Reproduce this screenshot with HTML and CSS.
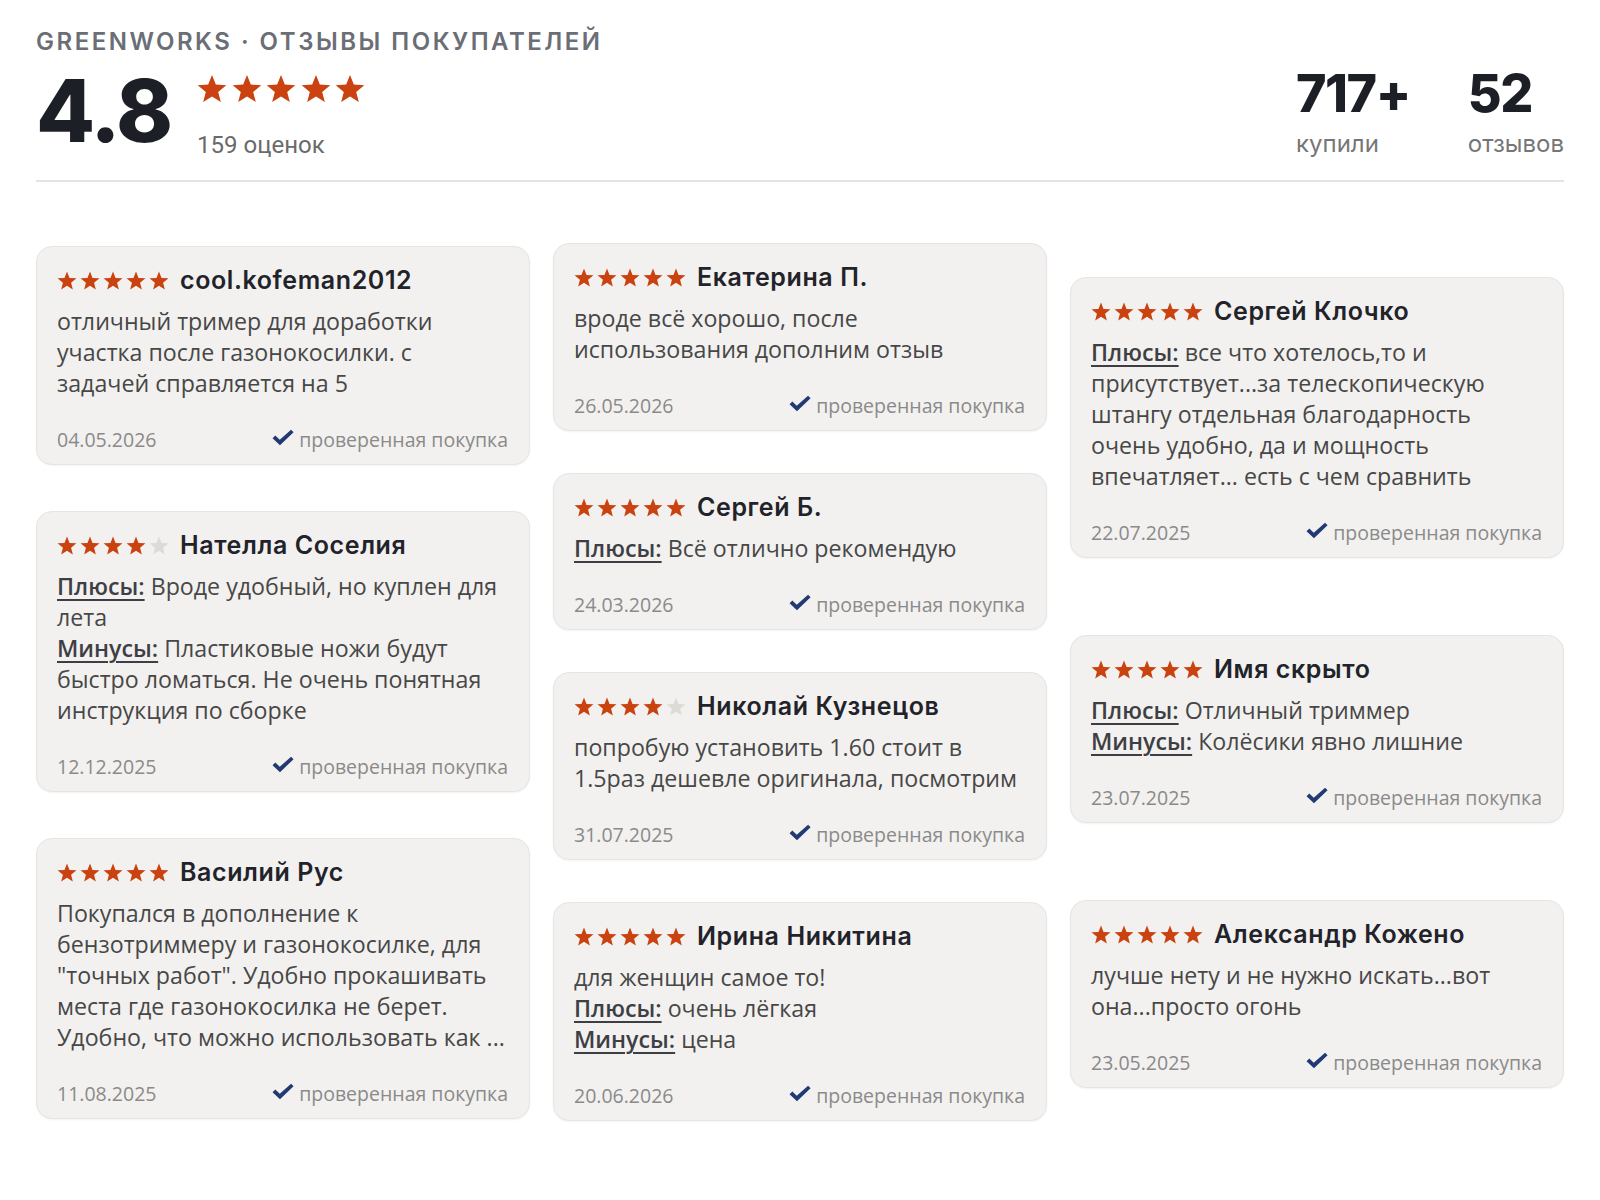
FILE: index.html
```html
<!DOCTYPE html>
<html lang="ru">
<head>
<meta charset="utf-8">
<title>Greenworks · отзывы покупателей</title>
<link rel="stylesheet" href="styles.css">
</head>
<body>
<svg class="defs" aria-hidden="true">
  <defs>
    <symbol id="star" viewBox="0 0 24 23">
      <polygon points="12,0.6 15.06,8.39 23.41,8.89 16.95,14.21 19.05,22.31 12,17.8 4.95,22.31 7.05,14.21 0.59,8.89 8.94,8.39"/>
    </symbol>
    <symbol id="check" viewBox="0 0 21 16">
      <polygon points="0.5,8.6 3.2,6.2 7.4,10.2 18.2,0.5 20.6,2.9 7.6,15.5"/>
    </symbol>
  </defs>
</svg>

<main class="page">
  <header class="summary">
    <div class="brand">GREENWORKS · ОТЗЫВЫ ПОКУПАТЕЛЕЙ</div>
    <div class="summary-row">
      <div class="rating">
        <div class="score">4.8</div>
        <div class="rating-meta">
          <div class="big-stars">
            <svg class="bstar"><use href="#star"/></svg>
            <svg class="bstar"><use href="#star"/></svg>
            <svg class="bstar"><use href="#star"/></svg>
            <svg class="bstar"><use href="#star"/></svg>
            <svg class="bstar"><use href="#star"/></svg>
          </div>
          <div class="count">159 оценок</div>
        </div>
      </div>
      <div class="stats">
        <div class="stat">
          <div class="stat-num">717+</div>
          <div class="stat-label">купили</div>
        </div>
        <div class="stat">
          <div class="stat-num">52</div>
          <div class="stat-label">отзывов</div>
        </div>
      </div>
    </div>
  </header>

  <section class="grid">
    <div class="col col-a">
      <article class="card">
        <div class="card-head">
          <span class="stars"><svg class="s on"><use href="#star"/></svg><svg class="s on"><use href="#star"/></svg><svg class="s on"><use href="#star"/></svg><svg class="s on"><use href="#star"/></svg><svg class="s on"><use href="#star"/></svg></span>
          <span class="name">cool.kofeman2012</span>
        </div>
        <p class="text">отличный тример для доработки участка после газонокосилки. с задачей справляется на 5</p>
        <div class="foot"><span class="date">04.05.2026</span><span class="verified"><svg class="check"><use href="#check"/></svg>проверенная покупка</span></div>
      </article>

      <article class="card">
        <div class="card-head">
          <span class="stars"><svg class="s on"><use href="#star"/></svg><svg class="s on"><use href="#star"/></svg><svg class="s on"><use href="#star"/></svg><svg class="s on"><use href="#star"/></svg><svg class="s off"><use href="#star"/></svg></span>
          <span class="name">Нателла Соселия</span>
        </div>
        <p class="text"><span class="lbl">Плюсы:</span> Вроде удобный, но куплен для лета</p>
        <p class="text next"><span class="lbl">Минусы:</span> Пластиковые ножи будут быстро ломаться. Не очень понятная инструкция по сборке</p>
        <div class="foot"><span class="date">12.12.2025</span><span class="verified"><svg class="check"><use href="#check"/></svg>проверенная покупка</span></div>
      </article>

      <article class="card">
        <div class="card-head">
          <span class="stars"><svg class="s on"><use href="#star"/></svg><svg class="s on"><use href="#star"/></svg><svg class="s on"><use href="#star"/></svg><svg class="s on"><use href="#star"/></svg><svg class="s on"><use href="#star"/></svg></span>
          <span class="name">Василий Рус</span>
        </div>
        <p class="text clamp">Покупался в дополнение к бензотриммеру и газонокосилке, для "точных работ". Удобно прокашивать места где газонокосилка не берет. Удобно, что можно использовать как ...</p>
        <div class="foot"><span class="date">11.08.2025</span><span class="verified"><svg class="check"><use href="#check"/></svg>проверенная покупка</span></div>
      </article>
    </div>

    <div class="col col-b">
      <article class="card">
        <div class="card-head">
          <span class="stars"><svg class="s on"><use href="#star"/></svg><svg class="s on"><use href="#star"/></svg><svg class="s on"><use href="#star"/></svg><svg class="s on"><use href="#star"/></svg><svg class="s on"><use href="#star"/></svg></span>
          <span class="name">Екатерина П.</span>
        </div>
        <p class="text">вроде всё хорошо, после использования дополним отзыв</p>
        <div class="foot"><span class="date">26.05.2026</span><span class="verified"><svg class="check"><use href="#check"/></svg>проверенная покупка</span></div>
      </article>

      <article class="card">
        <div class="card-head">
          <span class="stars"><svg class="s on"><use href="#star"/></svg><svg class="s on"><use href="#star"/></svg><svg class="s on"><use href="#star"/></svg><svg class="s on"><use href="#star"/></svg><svg class="s on"><use href="#star"/></svg></span>
          <span class="name">Сергей Б.</span>
        </div>
        <p class="text"><span class="lbl">Плюсы:</span> Всё отлично рекомендую</p>
        <div class="foot"><span class="date">24.03.2026</span><span class="verified"><svg class="check"><use href="#check"/></svg>проверенная покупка</span></div>
      </article>

      <article class="card">
        <div class="card-head">
          <span class="stars"><svg class="s on"><use href="#star"/></svg><svg class="s on"><use href="#star"/></svg><svg class="s on"><use href="#star"/></svg><svg class="s on"><use href="#star"/></svg><svg class="s off"><use href="#star"/></svg></span>
          <span class="name">Николай Кузнецов</span>
        </div>
        <p class="text">попробую установить 1.60 стоит в 1.5раз дешевле оригинала, посмотрим</p>
        <div class="foot"><span class="date">31.07.2025</span><span class="verified"><svg class="check"><use href="#check"/></svg>проверенная покупка</span></div>
      </article>

      <article class="card">
        <div class="card-head">
          <span class="stars"><svg class="s on"><use href="#star"/></svg><svg class="s on"><use href="#star"/></svg><svg class="s on"><use href="#star"/></svg><svg class="s on"><use href="#star"/></svg><svg class="s on"><use href="#star"/></svg></span>
          <span class="name">Ирина Никитина</span>
        </div>
        <p class="text">для женщин самое то!</p>
        <p class="text next"><span class="lbl">Плюсы:</span> очень лёгкая</p>
        <p class="text next"><span class="lbl">Минусы:</span> цена</p>
        <div class="foot"><span class="date">20.06.2026</span><span class="verified"><svg class="check"><use href="#check"/></svg>проверенная покупка</span></div>
      </article>
    </div>

    <div class="col col-c">
      <article class="card">
        <div class="card-head">
          <span class="stars"><svg class="s on"><use href="#star"/></svg><svg class="s on"><use href="#star"/></svg><svg class="s on"><use href="#star"/></svg><svg class="s on"><use href="#star"/></svg><svg class="s on"><use href="#star"/></svg></span>
          <span class="name">Сергей Клочко</span>
        </div>
        <p class="text"><span class="lbl">Плюсы:</span> все что хотелось,то и присутствует...за телескопическую штангу отдельная благодарность очень удобно, да и мощность впечатляет... есть с чем сравнить</p>
        <div class="foot"><span class="date">22.07.2025</span><span class="verified"><svg class="check"><use href="#check"/></svg>проверенная покупка</span></div>
      </article>

      <article class="card">
        <div class="card-head">
          <span class="stars"><svg class="s on"><use href="#star"/></svg><svg class="s on"><use href="#star"/></svg><svg class="s on"><use href="#star"/></svg><svg class="s on"><use href="#star"/></svg><svg class="s on"><use href="#star"/></svg></span>
          <span class="name">Имя скрыто</span>
        </div>
        <p class="text"><span class="lbl">Плюсы:</span> Отличный триммер</p>
        <p class="text next"><span class="lbl">Минусы:</span> Колёсики явно лишние</p>
        <div class="foot"><span class="date">23.07.2025</span><span class="verified"><svg class="check"><use href="#check"/></svg>проверенная покупка</span></div>
      </article>

      <article class="card">
        <div class="card-head">
          <span class="stars"><svg class="s on"><use href="#star"/></svg><svg class="s on"><use href="#star"/></svg><svg class="s on"><use href="#star"/></svg><svg class="s on"><use href="#star"/></svg><svg class="s on"><use href="#star"/></svg></span>
          <span class="name">Александр Кожено</span>
        </div>
        <p class="text">лучше нету и не нужно искать...вот она...просто огонь</p>
        <div class="foot"><span class="date">23.05.2025</span><span class="verified"><svg class="check"><use href="#check"/></svg>проверенная покупка</span></div>
      </article>
    </div>
  </section>
</main>
</body>
</html>
```

FILE: styles.css
```css
* { box-sizing: border-box; }

html, body {
  margin: 0;
  padding: 0;
  background: #ffffff;
}

.defs {
  position: absolute;
  width: 0;
  height: 0;
  overflow: hidden;
}

.page {
  padding: 27px 36px 40px;
  font-family: "Open Sans", "Noto Sans", sans-serif;
}

/* ---------- summary ---------- */
.summary {
  border-bottom: 2px solid #e4e4e4;
  padding-bottom: 20px;
}

.brand {
  font-family: Inter, "Noto Sans", sans-serif;
  font-weight: 600;
  font-size: 24px;
  line-height: 30px;
  color: #6b6e76;
  letter-spacing: 2.5px;
}

.summary-row {
  display: flex;
  justify-content: space-between;
  align-items: flex-start;
  margin-top: 11px;
}

.rating {
  display: flex;
  align-items: flex-start;
  gap: 26px;
}

.score {
  font-family: Inter, sans-serif;
  font-weight: 800;
  font-size: 86px;
  line-height: 86px;
  letter-spacing: -2px;
  color: #1d1f27;
}

.rating-meta {
  padding-top: 6px;
}

.big-stars {
  display: flex;
  gap: 4.5px;
  fill: #c9420f;
}

.bstar {
  width: 30px;
  height: 29px;
  display: block;
}

.count {
  margin-top: 27px;
  font-family: Roboto, sans-serif;
  font-size: 24px;
  line-height: 30px;
  color: #6a6a6a;
}

.stats {
  display: flex;
  gap: 58px;
}

.stat-num {
  font-family: Inter, sans-serif;
  font-weight: 800;
  font-size: 52px;
  line-height: 52px;
  letter-spacing: -1.5px;
  color: #1d1f27;
}

.stat-label {
  margin-top: 9px;
  font-family: Inter, sans-serif;
  font-size: 24px;
  line-height: 30px;
  color: #767676;
}

/* ---------- grid ---------- */
.grid {
  display: grid;
  grid-template-columns: repeat(3, 1fr);
  column-gap: 23px;
  align-items: start;
  margin-top: 61px;
}

.col {
  display: flex;
  flex-direction: column;
}

.col-a { gap: 46px; padding-top: 3px; }
.col-b { gap: 42px; }
.col-c { gap: 77px; padding-top: 34px; }

.card {
  background: #f2f1ef;
  border: 1px solid #e6e5e2;
  border-radius: 16px;
  padding: 17px 21px 11px 20px;
  box-shadow: 0 1px 2px rgba(0, 0, 0, 0.05);
}

.card-head {
  display: flex;
  align-items: center;
  gap: 11px;
  height: 32px;
}

.stars {
  display: flex;
  gap: 3px;
}

.s {
  width: 20px;
  height: 19px;
  display: block;
}

.s.on { fill: #c9420f; }
.s.off { fill: #dedbd7; }

.name {
  font-family: Inter, "Noto Sans", sans-serif;
  font-weight: 600;
  font-size: 25px;
  line-height: 32px;
  letter-spacing: 0.6px;
  color: #22232a;
  white-space: nowrap;
}

.text {
  margin: 10px 0 0;
  font-size: 23.2px;
  line-height: 31px;
  color: #474747;
}

.text.next { margin-top: 0; }

.clamp {
  display: -webkit-box;
  -webkit-line-clamp: 5;
  -webkit-box-orient: vertical;
  overflow: hidden;
}

.lbl {
  font-weight: 600;
  color: #3e3f44;
  text-decoration: underline;
  text-decoration-thickness: 2px;
  text-underline-offset: 4px;
}

.foot {
  display: flex;
  justify-content: space-between;
  align-items: center;
  margin-top: 28px;
  height: 26px;
  font-size: 19.5px;
  line-height: 26px;
  color: #8a8a8a;
}

.verified {
  display: flex;
  align-items: center;
  gap: 5px;
}

.check {
  width: 22px;
  height: 17px;
  fill: #213a73;
  display: block;
  margin-top: -5px;
}
```
